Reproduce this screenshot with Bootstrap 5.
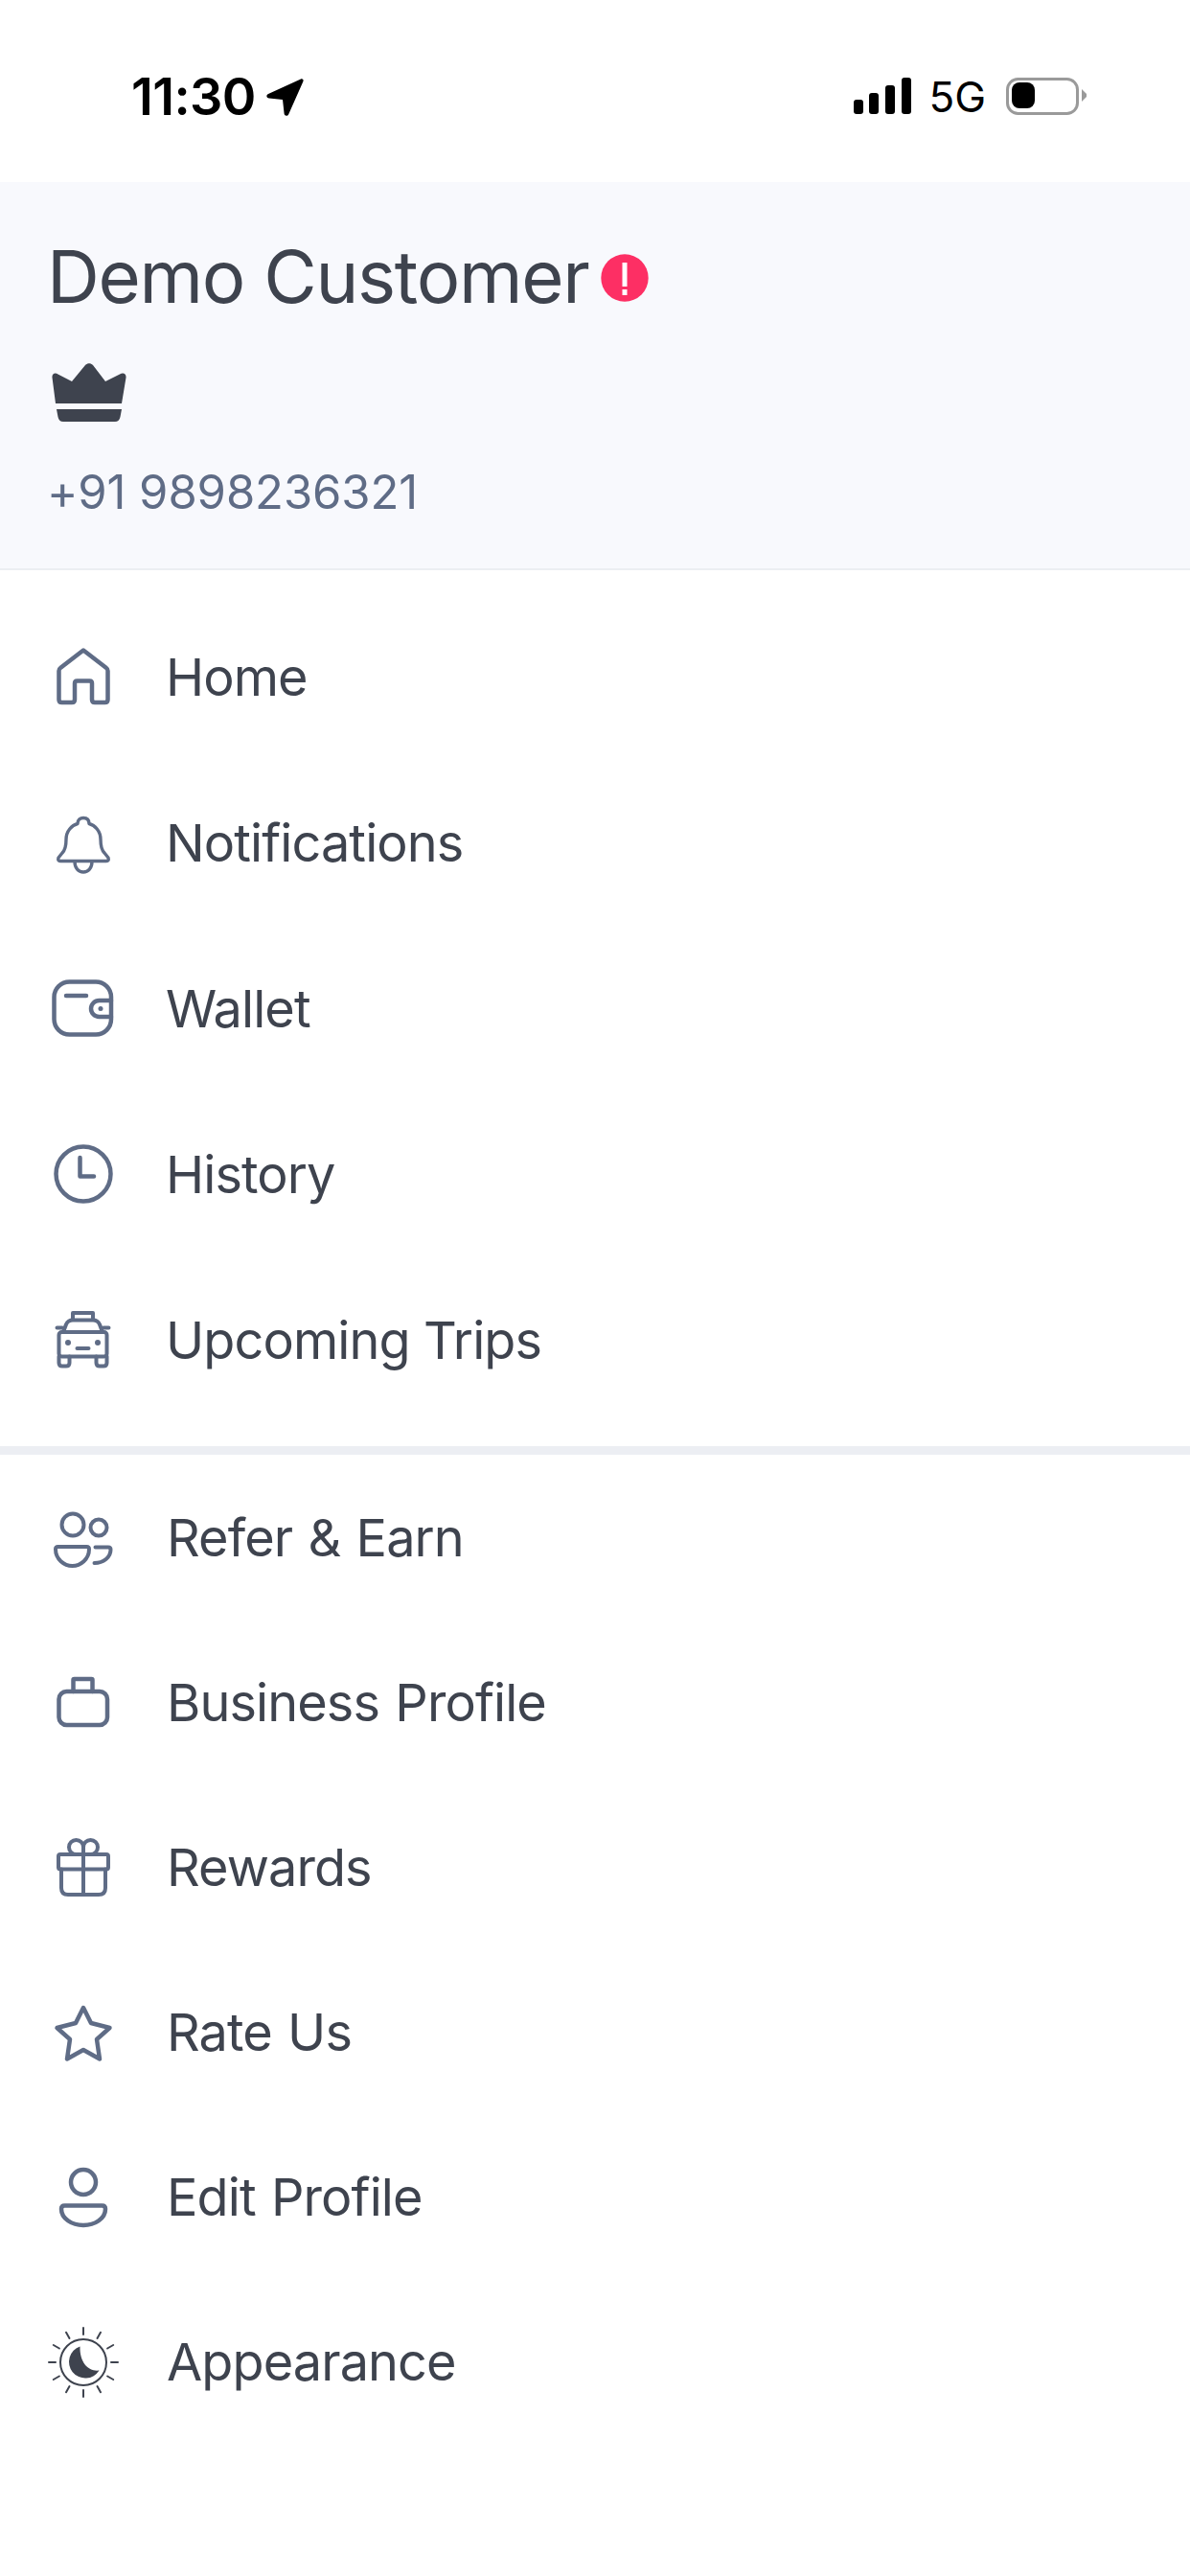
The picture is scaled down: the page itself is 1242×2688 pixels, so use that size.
<!DOCTYPE html>
<html lang="en">
  <head>
    <meta charset="UTF-8" />
    <title>Menu</title>
    <link
      href="https://cdn.jsdelivr.net/npm/bootstrap@5.3.2/dist/css/bootstrap.min.css"
      rel="stylesheet"
    />
    <style>
      body {
        font-family: Inter, "Liberation Sans", sans-serif;
        background-color: #ffffff;
        color: #3e434e;
      }

      .status-row {
        height: 190px;
        padding: 79px 108px 0 137px;
      }

      .status-time {
        font-size: 54px;
        font-weight: 600;
        line-height: 44px;
        color: #000000;
        letter-spacing: -0.6px;
      }

      .status-arrow {
        margin: 2px 0 0 10px;
      }

      .status-signal {
        margin: 2px 18px 0 0;
      }

      .status-net {
        font-size: 44px;
        line-height: 44px;
        color: #000000;
      }

      .status-battery {
        margin: 2px 0 0 21px;
      }

      .profile-head {
        height: 405px;
        padding: 54px 49px 0;
        background-color: #f8f9fd;
        border-bottom: 2px solid #eceef2;
      }

      .profile-name {
        font-size: 76px;
        font-weight: 400;
        line-height: 88px;
        letter-spacing: -1.3px;
        margin: 0;
      }

      .profile-alert {
        margin: 4px 0 0 12px;
      }

      .profile-crown {
        display: block;
        margin: 47px 0 0 5px;
      }

      .profile-phone {
        font-size: 49px;
        line-height: 60px;
        letter-spacing: -0.1px;
        color: #5f6c86;
        margin: 44px 0 0;
      }

      .menu-group {
        padding: 24.5px 0;
      }

      .menu-group + .menu-group {
        padding: 0;
        border-top: 9px solid #eceef3;
      }

      .menu-row.list-group-item {
        height: 173px;
        padding: 0 0 0 51px;
        gap: 50px;
        border: 0;
        background: transparent;
        font-size: 54px;
        letter-spacing: -0.9px;
        color: #3e434e;
      }

      .menu-group + .menu-group .menu-row.list-group-item {
        height: 172px;
        gap: 51px;
        word-spacing: 2px;
      }

      .menu-icon {
        flex: none;
        overflow: visible;
        fill: none;
        stroke: #5f6c86;
        stroke-width: 4.5;
        stroke-linecap: round;
        stroke-linejoin: round;
      }

      .icon-sun {
        stroke: #3e434e;
        position: relative;
        top: 1px;
      }
    </style>
  </head>
  <body>
    <div class="status-row d-flex justify-content-between">
      <div class="d-flex">
        <span class="status-time">11:30</span>
        <svg class="status-arrow" width="40" height="40" viewBox="0 0 40 40">
          <path d="M37 1.500 3 17c-2.600 1.200-2 4.400.8 4.600L18 23l1.600 14.600c.3 2.600 3.500 3 4.600.6L39.400 4c.7-1.700-.7-3.200-2.400-2.500Z" fill="#000" />
        </svg>
      </div>
      <div class="d-flex align-items-start">
        <svg class="status-signal" width="60" height="38" viewBox="0 0 60 38" fill="#000">
          <rect x="0" y="23" width="10" height="15" rx="3" />
          <rect x="16" y="16" width="10" height="22" rx="3" />
          <rect x="33" y="8" width="10" height="30" rx="3" />
          <rect x="50" y="0" width="10" height="38" rx="3" />
        </svg>
        <span class="status-net">5G</span>
        <svg class="status-battery" width="84" height="40" viewBox="0 0 84 40">
          <rect x="1.500" y="1.500" width="73" height="36" rx="11" fill="none" stroke="#9a9a9a" stroke-width="3" />
          <rect x="6" y="5" width="24" height="27" rx="8" fill="#000" />
          <path d="M79 12l5 5v3l-5 5Z" fill="#9a9a9a" />
        </svg>
      </div>
    </div>

    <div class="profile-head">
      <div class="d-flex align-items-center">
        <h1 class="profile-name">Demo Customer</h1>
        <svg class="profile-alert" width="50" height="50" viewBox="0 0 50 50">
          <circle cx="25" cy="25" r="24.700" fill="#fd2f64" />
          <rect x="22.500" y="9" width="5" height="25" fill="#fff" />
          <rect x="22.500" y="37" width="5" height="6" fill="#fff" />
        </svg>
      </div>
      <svg class="profile-crown" width="78" height="61" viewBox="0 0 78 61" fill="#3e434e">
        <path d="M4 42 0.500 15C0 11 3.500 9 6.500 11.500L21 19 35 2C37.500-.5 40.500-.5 43 2L56 19 71 11.500C74.500 9 78 11 77.500 15L73 42Z" />
        <path d="M5 48H73L71.500 56C71 59 69 61 66 61H12C9 61 7 59 6.500 56Z" />
      </svg>
      <p class="profile-phone">+91 9898236321</p>
    </div>

    <div class="menu-group list-group list-group-flush">
      <div class="menu-row list-group-item d-flex align-items-center">
        <svg class="menu-icon" width="72" height="72" viewBox="0 0 72 72">
          <path d="M36 8.500 60 27Q61.500 28 61.500 30V60Q61.500 63 58.500 63H48Q45 63 45 60V43Q45 40.500 42.500 40.500H29.500Q27 40.500 27 43V60Q27 63 24 63H13.500Q10.500 63 10.500 60V30Q10.500 28 12 27Z" />
        </svg>
        Home
      </div>
      <div class="menu-row list-group-item d-flex align-items-center">
        <svg class="menu-icon" width="72" height="72" viewBox="0 0 72 72" style="stroke-width: 3.4">
          <path d="M18 33C18 24 24 18 30 16.500 30 12 33 10.500 36 10.500 39 10.500 42 12 42 16.500 48 18 54 24 54 33 54 40 55 44 58 47L62 52Q63 55.500 60 55.500H12Q9 55.500 10 52L14 47C17 44 18 40 18 33Z" />
          <path d="M27 56C27 63 31 67 36 67 41 67 45 63 45 56" />
        </svg>
        Notifications
      </div>
      <div class="menu-row list-group-item d-flex align-items-center">
        <svg class="menu-icon" width="72" height="72" viewBox="0 0 72 72">
          <rect x="5.500" y="8.500" width="59.500" height="55" rx="16" />
          <path d="M18 23H39" />
          <path d="M65 28H52.500A8.500 8.500 0 0 0 52.500 45H65" />
          <circle cx="54" cy="36.500" r="2.500" fill="#5f6c86" stroke="none" />
        </svg>
        Wallet
      </div>
      <div class="menu-row list-group-item d-flex align-items-center">
        <svg class="menu-icon" width="72" height="72" viewBox="0 0 72 72">
          <circle cx="36" cy="36" r="28.500" />
          <path d="M32.500 19V38.500H47" />
        </svg>
        History
      </div>
      <div class="menu-row list-group-item d-flex align-items-center">
        <svg class="menu-icon" width="72" height="72" viewBox="0 0 72 72" style="stroke-width: 4">
          <path d="M25 15V8H46V15" />
          <path d="M15 28 18 20Q20 15.500 25 15.500H46Q51 15.500 53 20L56 28" />
          <path d="M8.500 23.500H14M57 23.500H62.500" />
          <rect x="10.500" y="28" width="50" height="25.500" rx="3" />
          <path d="M10.500 53.500V60Q10.500 63.500 14 63.500H18Q21.500 63.500 21.500 60V53.500M49.500 53.500V60Q49.500 63.500 53 63.500H57Q60.500 63.500 60.500 60V53.500" />
          <circle cx="20" cy="39" r="3" fill="#5f6c86" stroke="none" />
          <circle cx="51" cy="39" r="3" fill="#5f6c86" stroke="none" />
          <path d="M29.500 45H41.500" />
        </svg>
        Upcoming Trips
      </div>
    </div>

    <div class="menu-group list-group list-group-flush">
      <div class="menu-row list-group-item d-flex align-items-center">
        <svg class="menu-icon" width="72" height="72" viewBox="0 0 72 72" style="stroke-width: 4">
          <circle cx="25" cy="23" r="11.500" />
          <circle cx="52" cy="26" r="8.500" />
          <path d="M9.500 46H39.500Q42 46 42 48.500C42 59 33 66 24.500 66 16 66 7 59 7 48.500Q7 46 9.500 46Z" />
          <path d="M48.500 46.500H62Q64.500 46.500 64.500 49C64.500 57 57 63 47.500 63" />
        </svg>
        Refer &amp; Earn
      </div>
      <div class="menu-row list-group-item d-flex align-items-center">
        <svg class="menu-icon" width="72" height="72" viewBox="0 0 72 72">
          <rect x="10.500" y="25" width="50.500" height="35" rx="8" />
          <path d="M25.500 25V13Q25.500 12 26.500 12H44.500Q45.500 12 45.500 13V25" />
        </svg>
        Business Profile
      </div>
      <div class="menu-row list-group-item d-flex align-items-center">
        <svg class="menu-icon" width="72" height="72" viewBox="0 0 72 72" style="stroke-width: 4">
          <rect x="10" y="23" width="52" height="15.500" rx="2" />
          <path d="M13 38.500V58Q13 65 20 65H52Q59 65 59 58V38.500" />
          <path d="M36 23V65" />
          <path d="M36 23V15.500A7.500 7.500 0 1 0 28.500 23M36 15.500A7.500 7.500 0 1 1 43.500 23" />
        </svg>
        Rewards
      </div>
      <div class="menu-row list-group-item d-flex align-items-center">
        <svg class="menu-icon" width="72" height="72" viewBox="0 0 72 72">
          <path d="M36 11 44 27 63.500 32 50 44 53 64.500 36 55 19 64.500 22 44 8.500 32 28 27Z" />
        </svg>
        Rate Us
      </div>
      <div class="menu-row list-group-item d-flex align-items-center">
        <svg class="menu-icon" width="72" height="72" viewBox="0 0 72 72">
          <circle cx="36" cy="21" r="13" />
          <path d="M16.500 45.500H55.500Q59 45.500 59 49C59 59 48 66 36 66 24 66 13 59 13 49Q13 45.500 16.500 45.500Z" />
        </svg>
        Edit Profile
      </div>
      <div class="menu-row list-group-item d-flex align-items-center">
        <svg class="menu-icon icon-sun" width="72" height="72" viewBox="0 0 72 72" style="stroke-width: 2">
          <circle cx="36" cy="36" r="24" />
          <path d="M32.500 19.500A17 17 0 1 0 52.500 44.500C42 46 32 37 32.500 19.500Z" fill="#3e434e" stroke="none" />
          <path d="M36 0V7M36 65V72M0 36H7M65 36H72M18 4.800 21.500 10.900M50.500 61.100 54 67.200M54 4.800 50.500 10.900M21.500 61.100 18 67.200M4.800 18 10.900 21.500M61.100 50.500 67.200 54M67.200 18 61.100 21.500M10.900 50.500 4.800 54" />
        </svg>
        Appearance
      </div>
    </div>

    <script src="https://cdn.jsdelivr.net/npm/bootstrap@5.3.2/dist/js/bootstrap.bundle.min.js"></script>
  </body>
</html>
